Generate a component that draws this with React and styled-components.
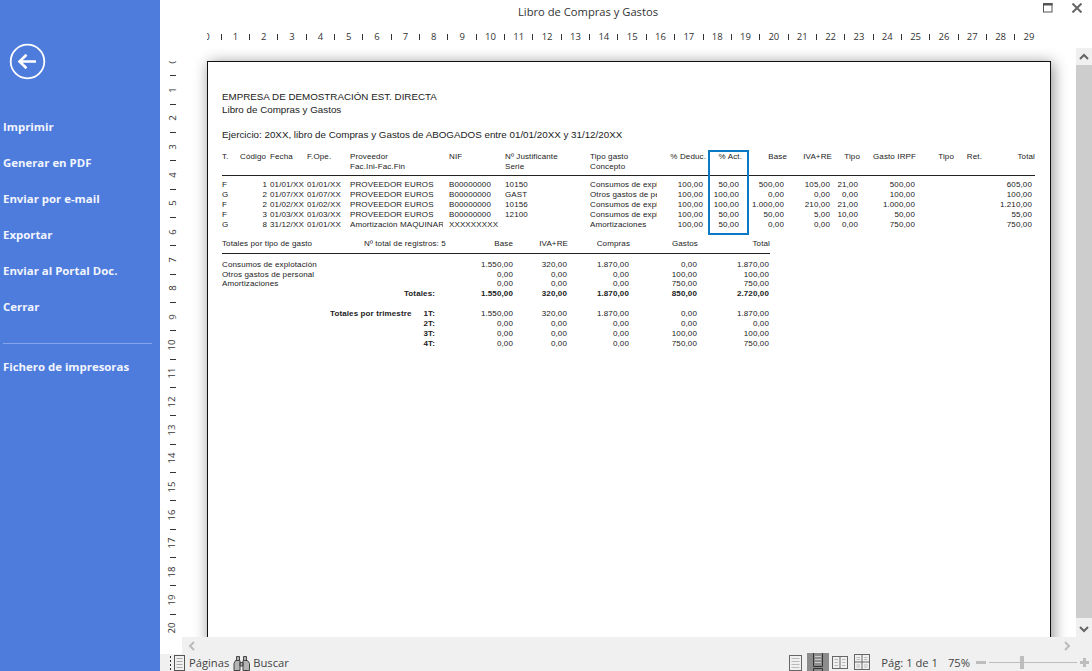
import React from 'react';
import styled, { createGlobalStyle } from 'styled-components';

const Global = createGlobalStyle`
  html, body { margin: 0; padding: 0; background: #fff; overflow: hidden; }
  #root { width: 1092px; height: 671px; }
`;

const Shell = styled.div`
  display: flex; width: 1092px; height: 671px; overflow: hidden;
  font-family: "Open Sans", "Liberation Sans", sans-serif;
`;
const Sidebar = styled.nav`
  width: 160px; flex: none; background: #4d7cdd; color: #f2f5fd;
  display: flex; flex-direction: column; padding-top: 43px; box-sizing: border-box;
`;
const BackButton = styled.div`
  margin-left: 9px; width: 37px; height: 37px; margin-bottom: 29px;
`;
const MenuItem = styled.div`
  height: 36px; line-height: 36px; padding-left: 3px;
  font-size: 11.4px; font-weight: 700; white-space: nowrap;
`;
const MenuRule = styled.div`
  height: 1px; background: #86a5e8; margin: 18px 8px 5px 3px;
`;
const Main = styled.div`
  flex: 1; min-width: 0; display: flex; flex-direction: column;
`;
const TitleBar = styled.header`
  height: 24px; flex: none; display: flex;
`;
const Title = styled.div`
  flex: 1; text-align: center; font-size: 11.2px; line-height: 24px; color: #333;
`;
const WindowButtons = styled.div`
  width: 76px; flex: none; display: flex; align-items: flex-start;
  padding: 3px 0 0 27px; box-sizing: border-box; gap: 19px;
`;
const TopRuler = styled.div`
  height: 24px; flex: none; margin-left: 47px; margin-right: 16px; overflow: hidden;
`;
const TopTrack = styled.div`
  display: flex; margin-left: -7.09px; height: 24px;
`;
const TopCell = styled.div`
  width: 14.175px; flex: none; display: flex; align-items: center; justify-content: center;
  font-size: 9.5px; color: #333; line-height: 22px; padding-top: 2px; box-sizing: border-box;
`;
const TopTick = styled.i`
  display: block; width: 1px; height: 6px; background: #333;
`;
const Content = styled.div`
  flex: 1; min-height: 0; display: flex;
`;
const SideRuler = styled.div`
  width: 22px; flex: none; overflow: hidden; margin-top: 13px; background: #fff;
`;
const SideTrack = styled.div`
  display: flex; flex-direction: column; margin-top: -6.6px;
`;
const SideCell = styled.div`
  height: 14.175px; flex: none; display: flex; align-items: center; justify-content: center;
  font-size: 9.5px; color: #333; padding-left: 3px; box-sizing: border-box;
`;
const SideNum = styled.span`
  display: block; transform: rotate(-90deg); line-height: 10px;
`;
const SideTick = styled.i`
  display: block; width: 6px; height: 1px; background: #333;
`;
const Viewport = styled.div`
  flex: 1; min-width: 0; overflow: hidden; padding: 13px 25px 0; box-sizing: border-box;
`;
const Page = styled.div`
  position: relative; height: 700px; background: #fff; border: 1px solid #111;
  box-shadow: 2px 2px 14px rgba(0,0,0,.45); padding: 28px 15px 0 14px; box-sizing: border-box;
  font-family: "Liberation Sans", Arial, sans-serif; color: #222;
`;
const Heading = styled.div`
  font-size: 9.8px; line-height: 13px; height: 13px; white-space: nowrap;
`;
const Gap = styled.div`
  height: ${p => p.$h}px;
`;
const Line = styled.div`
  height: 1px; background: #222;
`;
const MainGrid = styled.div`
  display: grid; height: 10px; line-height: 10px; font-size: 8px; letter-spacing: .12px; white-space: nowrap;
  grid-template-columns: 18px 30px 37px 43px 99px 56px 85px 70px 46px 36px 45px 45px 28px 56px 38px 28px 53px;
`;
const SumHead = styled.div`
  display: grid; height: 10px; line-height: 10px; font-size: 8px; letter-spacing: .12px; white-space: nowrap; width: 548px;
  grid-template-columns: 142px 72px 78px 54px 62px 68px 72px;
`;
const SumGrid = styled.div`
  display: grid; height: ${p => p.$h || 10}px; line-height: 10px; font-size: 8px; letter-spacing: .12px; white-space: nowrap; width: 548px;
  grid-template-columns: 108px 84px 22px 78px 54px 62px 68px 72px;
`;
const Cell = styled.div`
  min-width: 0; overflow: ${p => (p.$free ? 'visible' : 'hidden')}; text-align: ${p => (p.$right ? 'right' : 'left')};
  padding-right: ${p => p.$pad || 0}px; margin-right: ${p => p.$clip || 0}px;
  grid-column: ${p => p.$span || 'auto'}; font-weight: ${p => (p.$bold ? 700 : 400)};
`;
const SumBlock = styled.div`
  width: 548px;
`;
const HighlightBox = styled.div`
  position: absolute; left: 500px; top: 88px; width: 37px; height: 81px;
  border: 2px solid #0a7ac4;
`;
const VScroll = styled.div`
  width: 16px; flex: none; background: #f0f0f0; display: flex; flex-direction: column;
`;
const ScrollArrow = styled.div`
  height: 17px; flex: none; display: flex; align-items: center; justify-content: center;
`;
const VThumb = styled.div`
  flex: 1; background: #cdcdcd; margin-bottom: 2px;
`;
const HScrollRow = styled.div`
  height: 17px; flex: none; display: flex;
`;
const HBlank = styled.div`
  width: 22px; flex: none; background: #fff;
`;
const HScroll = styled.div`
  flex: 1; background: #f0f0f0; display: flex; justify-content: space-between; align-items: center;
  padding: 0 20px 0 5px;
`;
const StatusBar = styled.footer`
  height: 17px; flex: none; background: #f0f0f0; display: flex; align-items: center;
  font-size: 11.2px; color: #444; padding-left: 10px; box-sizing: border-box;
`;
const StatusLabel = styled.span`
  margin-left: ${p => p.$ml || 0}px; line-height: 17px; white-space: nowrap;
`;
const BinocularSlot = styled.div`
  margin-left: 4px; display: flex; flex: none;
`;
const ViewButton = styled.div`
  width: 22px; height: 18px; display: flex; align-items: center; justify-content: center;
  align-self: flex-end; flex: none;
  background: ${p => (p.$active ? '#8c8c8c' : 'transparent')}; margin-left: ${p => p.$ml || 0}px;
`;
const Spacer = styled.div`
  flex: 1;
`;
const ZoomTrack = styled.div`
  position: relative; width: 88px; height: 1px; background: #bdbdbd; margin: 0 3px; flex: none;
`;
const ZoomThumb = styled.div`
  position: absolute; left: 31px; top: -6px; width: 4px; height: 13px; background: #bdbdbd;
`;
const ZoomSign = styled.div`
  flex: none; display: flex; align-items: center;
  margin-left: ${p => p.$ml || 0}px; margin-right: ${p => p.$mr || 0}px;
`;

const BackIcon = () => (
  <svg width="37" height="37" viewBox="0 0 37 37" fill="none" stroke="#fff">
    <circle cx="18.5" cy="18.5" r="16.8" strokeWidth="1.8" />
    <path d="M27 18.5H10.5M17.5 11.8L10.5 18.5L17.5 25.2" strokeWidth="2.6" />
  </svg>
);
const RestoreIcon = () => (
  <svg width="10" height="10" viewBox="0 0 10 10" fill="none" stroke="#555">
    <rect x=".5" y=".5" width="8.5" height="8.5" />
    <rect x="0" y="0" width="9.5" height="2.5" fill="#555" stroke="none" />
  </svg>
);
const CloseIcon = () => (
  <svg width="10" height="10" viewBox="0 0 10 10" stroke="#666" strokeWidth="2">
    <path d="M.5 .5L9.5 9.5M9.5 .5L.5 9.5" />
  </svg>
);
const Chevron = ({ dir, color = '#666' }) => {
  const d = { up: 'M1 6L5 2L9 6', down: 'M1 2L5 6L9 2', left: 'M6 1L2 5L6 9', right: 'M2 1L6 5L2 9' }[dir];
  return (
    <svg width="10" height="10" viewBox="0 0 10 10" fill="none" stroke={color} strokeWidth="2"><path d={d} transform={dir === 'up' || dir === 'down' ? 'translate(0 1)' : 'translate(1 0)'} /></svg>
  );
};
const PagesIcon = () => (
  <svg width="15" height="16" viewBox="0 0 15 16" fill="none" stroke="#555">
    <path d="M.5 1v2M.5 5v2M.5 9v2M.5 13v2" stroke="#333" />
    <rect x="4.5" y=".5" width="10" height="15" />
    <path d="M6.5 3.5h6M6.5 6.5h6M6.5 9.5h6M6.5 12.5h6" stroke="#aaa" />
  </svg>
);
const BinocularIcon = () => (
  <svg width="17" height="16" viewBox="0 0 17 16" fill="#b4b4b4" stroke="#444">
    <path d="M3.5 1.5h3v4h-3zM10.5 1.5h3v4h-3z" />
    <path d="M2.5 5.5h4.500v10h-6v-7zM10 5.500h4.500l2 3v7h-6.500zM7 7.500h3v3.500h-3z" />
  </svg>
);
const SinglePage = ({ stroke = '#666', line = '#bbb' }) => (
  <svg width="13" height="16" viewBox="0 0 13 16" fill="none" stroke={stroke}>
    <rect x=".5" y=".5" width="12" height="15" />
    <path d="M2.500 3.500h8M2.500 6.500h8M2.500 9.500h8M2.500 12.500h8" stroke={line} />
  </svg>
);
const ScrollPage = () => (
  <svg width="12" height="18" viewBox="0 0 12 18" fill="none">
    <path d="M1.500 0v13.500h9V0" stroke="#333" />
    <path d="M3 3.500h6M3 6.500h6M3 9.500h6" stroke="#ccc" />
    <path d="M1.500 18v-2.500h9v2.500" stroke="#333" />
  </svg>
);
const TwoPages = () => (
  <svg width="16" height="13" viewBox="0 0 16 13" fill="none" stroke="#666">
    <rect x=".5" y=".5" width="15" height="12" />
    <path d="M8 .5v12" />
    <path d="M2.500 3.500h3.500M2.500 6.500h3.500M2.500 9.500h3.500M10 3.500h3.500M10 6.500h3.500M10 9.500h3.500" stroke="#bbb" />
  </svg>
);
const FourPages = () => (
  <svg width="16" height="16" viewBox="0 0 16 16" fill="none" stroke="#666">
    <rect x=".5" y=".5" width="15" height="15" />
    <path d="M8 .5v15M.5 8h15" />
    <path d="M2.500 3.500h3.500M2.500 5.500h3.500M10 3.500h3.500M10 5.500h3.500M2.500 11h3.500M2.500 13h3.500M10 11h3.500M10 13h3.500" stroke="#bbb" />
  </svg>
);
const Minus = () => <svg width="10" height="4" viewBox="0 0 10 4"><rect width="10" height="3" fill="#bdbdbd" /></svg>;
const Plus = () => <svg width="9" height="9" viewBox="0 0 9 9" fill="#bdbdbd"><path d="M3 0h3v3h3v3H6v3H3V6H0V3h3z" /></svg>;

const menu = ['Imprimir', 'Generar en PDF', 'Enviar por e-mail', 'Exportar', 'Enviar al Portal Doc.', 'Cerrar'];

const records = [
  ['F', '1', '01/01/XX', '01/01/XX', 'PROVEEDOR EUROS', 'B00000000', '10150', 'Consumos de explotación', '100,00', '50,00', '500,00', '105,00', '21,00', '500,00', '', '', '605,00'],
  ['G', '2', '01/07/XX', '01/07/XX', 'PROVEEDOR EUROS', 'B00000000', 'GAST', 'Otros gastos de personal', '100,00', '100,00', '0,00', '0,00', '0,00', '100,00', '', '', '100,00'],
  ['F', '2', '01/02/XX', '01/02/XX', 'PROVEEDOR EUROS', 'B00000000', '10156', 'Consumos de explotación', '100,00', '100,00', '1.000,00', '210,00', '21,00', '1.000,00', '', '', '1.210,00'],
  ['F', '3', '01/03/XX', '01/03/XX', 'PROVEEDOR EUROS', 'B00000000', '12100', 'Consumos de explotación', '100,00', '50,00', '50,00', '5,00', '10,00', '50,00', '', '', '55,00'],
  ['G', '8', '31/12/XX', '01/01/XX', 'Amortización MAQUINARIA', 'XXXXXXXXX', '', 'Amortizaciones', '100,00', '50,00', '0,00', '0,00', '0,00', '750,00', '', '', '750,00'],
];
const dataPad = { 1: 3, 8: 3, 9: 3, 10: 3, 11: 2, 12: 2, 13: 1, 16: 3 };
const dataClip = { 4: 6, 7: 3 };
const headA = ['T.', 'Código', 'Fecha', 'F.Ope.', 'Proveedor', 'NIF', 'Nº Justificante', 'Tipo gasto', '% Deduc.', '% Act.', 'Base', 'IVA+RE', 'Tipo', 'Gasto IRPF', 'Tipo', 'Ret.', 'Total'];
const headB = ['', '', '', '', 'Fac.Ini-Fac.Fin', '', 'Serie', 'Concepto', '', '', '', '', '', '', '', '', ''];
const headRight = new Set([8, 9, 10, 11, 12, 13, 14, 15, 16]);

const byType = [
  ['Consumos de explotación', '1.550,00', '320,00', '1.870,00', '0,00', '1.870,00'],
  ['Otros gastos de personal', '0,00', '0,00', '0,00', '100,00', '100,00'],
  ['Amortizaciones', '0,00', '0,00', '0,00', '750,00', '750,00'],
];
const byQuarter = [
  ['Totales por trimestre', '1T:', '1.550,00', '320,00', '1.870,00', '0,00', '1.870,00'],
  ['', '2T:', '0,00', '0,00', '0,00', '0,00', '0,00'],
  ['', '3T:', '0,00', '0,00', '0,00', '100,00', '100,00'],
  ['', '4T:', '0,00', '0,00', '0,00', '750,00', '750,00'],
];
const topCells = [];
for (let i = 0; i <= 29; i++) { topCells.push(i); if (i < 29) topCells.push(null); }
const sideCells = [];
for (let i = 0; i <= 21; i++) { sideCells.push(i); sideCells.push(null); }

export default function App() {
  return (
    <Shell>
      <Global />
      <Sidebar>
        <BackButton><BackIcon /></BackButton>
        {menu.map(m => <MenuItem key={m}>{m}</MenuItem>)}
        <MenuRule />
        <MenuItem>Fichero de impresoras</MenuItem>
      </Sidebar>
      <Main>
        <TitleBar>
          <Title>Libro de Compras y Gastos</Title>
          <WindowButtons><RestoreIcon /><CloseIcon /></WindowButtons>
        </TitleBar>
        <TopRuler>
          <TopTrack>
            {topCells.map((c, i) => <TopCell key={i}>{c === null ? <TopTick /> : c}</TopCell>)}
          </TopTrack>
        </TopRuler>
        <Content>
          <SideRuler>
            <SideTrack>
              {sideCells.map((c, i) => <SideCell key={i}>{c === null ? <SideTick /> : <SideNum>{c}</SideNum>}</SideCell>)}
            </SideTrack>
          </SideRuler>
          <Viewport>
            <Page>
              <Heading>EMPRESA DE DEMOSTRACIÓN EST. DIRECTA</Heading>
              <Heading>Libro de Compras y Gastos</Heading>
              <Gap $h={12} />
              <Heading>Ejercicio: 20XX, libro de Compras y Gastos de ABOGADOS entre 01/01/20XX y 31/12/20XX</Heading>
              <Gap $h={11} />
              <MainGrid>{headA.map((h, i) => <Cell key={i} $right={headRight.has(i)}>{h}</Cell>)}</MainGrid>
              <MainGrid>{headB.map((h, i) => <Cell key={i}>{h}</Cell>)}</MainGrid>
              <Gap $h={3} />
              <Line />
              <Gap $h={4} />
              {records.map((r, k) => (
                <MainGrid key={k}>
                  {r.map((v, i) => <Cell key={i} $right={i === 1 || i >= 8} $pad={dataPad[i]} $clip={dataClip[i]} $free={i === 5}>{v}</Cell>)}
                </MainGrid>
              ))}
              <Gap $h={9} />
              <SumBlock>
                <SumHead>
                  <Cell>Totales por tipo de gasto</Cell>
                  <Cell $free>Nº total de registros: 5</Cell>
                  <Cell $right $pad={1}>Base</Cell>
                  <Cell $right $free $pad={-2}>IVA+RE</Cell>
                  <Cell $right>Compras</Cell>
                  <Cell $right $free $pad={-3}>Gastos</Cell>
                  <Cell $right>Total</Cell>
                </SumHead>
                <Gap $h={4} />
                <Line />
                <Gap $h={6} />
                {byType.map((r, k) => (
                  <SumGrid key={k} $h={k === 1 ? 9 : 10}>
                    <Cell $span="1 / span 3">{r[0]}</Cell>
                    {r.slice(1).map((v, i) => <Cell key={i} $right $pad={1}>{v}</Cell>)}
                  </SumGrid>
                ))}
                <SumGrid>
                  <Cell $span="1 / span 3" $right $bold $pad={1}>Totales:</Cell>
                  {['1.550,00', '320,00', '1.870,00', '850,00', '2.720,00'].map((v, i) => <Cell key={i} $right $bold $pad={1}>{v}</Cell>)}
                </SumGrid>
                <Gap $h={10} />
                {byQuarter.map((r, k) => (
                  <SumGrid key={k}>
                    <Cell $span="2 / span 1" $bold>{r[0]}</Cell>
                    <Cell $bold $right $pad={1}>{r[1]}</Cell>
                    {r.slice(2).map((v, i) => <Cell key={i} $right $pad={1}>{v}</Cell>)}
                  </SumGrid>
                ))}
              </SumBlock>
              <HighlightBox />
            </Page>
          </Viewport>
          <VScroll>
            <ScrollArrow><Chevron dir="up" /></ScrollArrow>
            <VThumb />
            <ScrollArrow><Chevron dir="down" /></ScrollArrow>
          </VScroll>
        </Content>
        <HScrollRow>
          <HBlank />
          <HScroll>
            <Chevron dir="left" color="#bbb" />
            <Chevron dir="right" color="#bbb" />
          </HScroll>
        </HScrollRow>
        <StatusBar>
          <PagesIcon />
          <StatusLabel $ml={4}>Páginas</StatusLabel>
          <BinocularSlot><BinocularIcon /></BinocularSlot>
          <StatusLabel $ml={3}>Buscar</StatusLabel>
          <Spacer />
          <SinglePage />
          <ViewButton $active $ml={5}><ScrollPage /></ViewButton>
          <ViewButton><TwoPages /></ViewButton>
          <ViewButton><FourPages /></ViewButton>
          <StatusLabel $ml={8}>Pág: 1 de 1</StatusLabel>
          <StatusLabel $ml={10}>75%</StatusLabel>
          <ZoomSign $ml={6}><Minus /></ZoomSign>
          <ZoomTrack><ZoomThumb /></ZoomTrack>
          <ZoomSign $mr={3}><Plus /></ZoomSign>
        </StatusBar>
      </Main>
    </Shell>
  );
}
